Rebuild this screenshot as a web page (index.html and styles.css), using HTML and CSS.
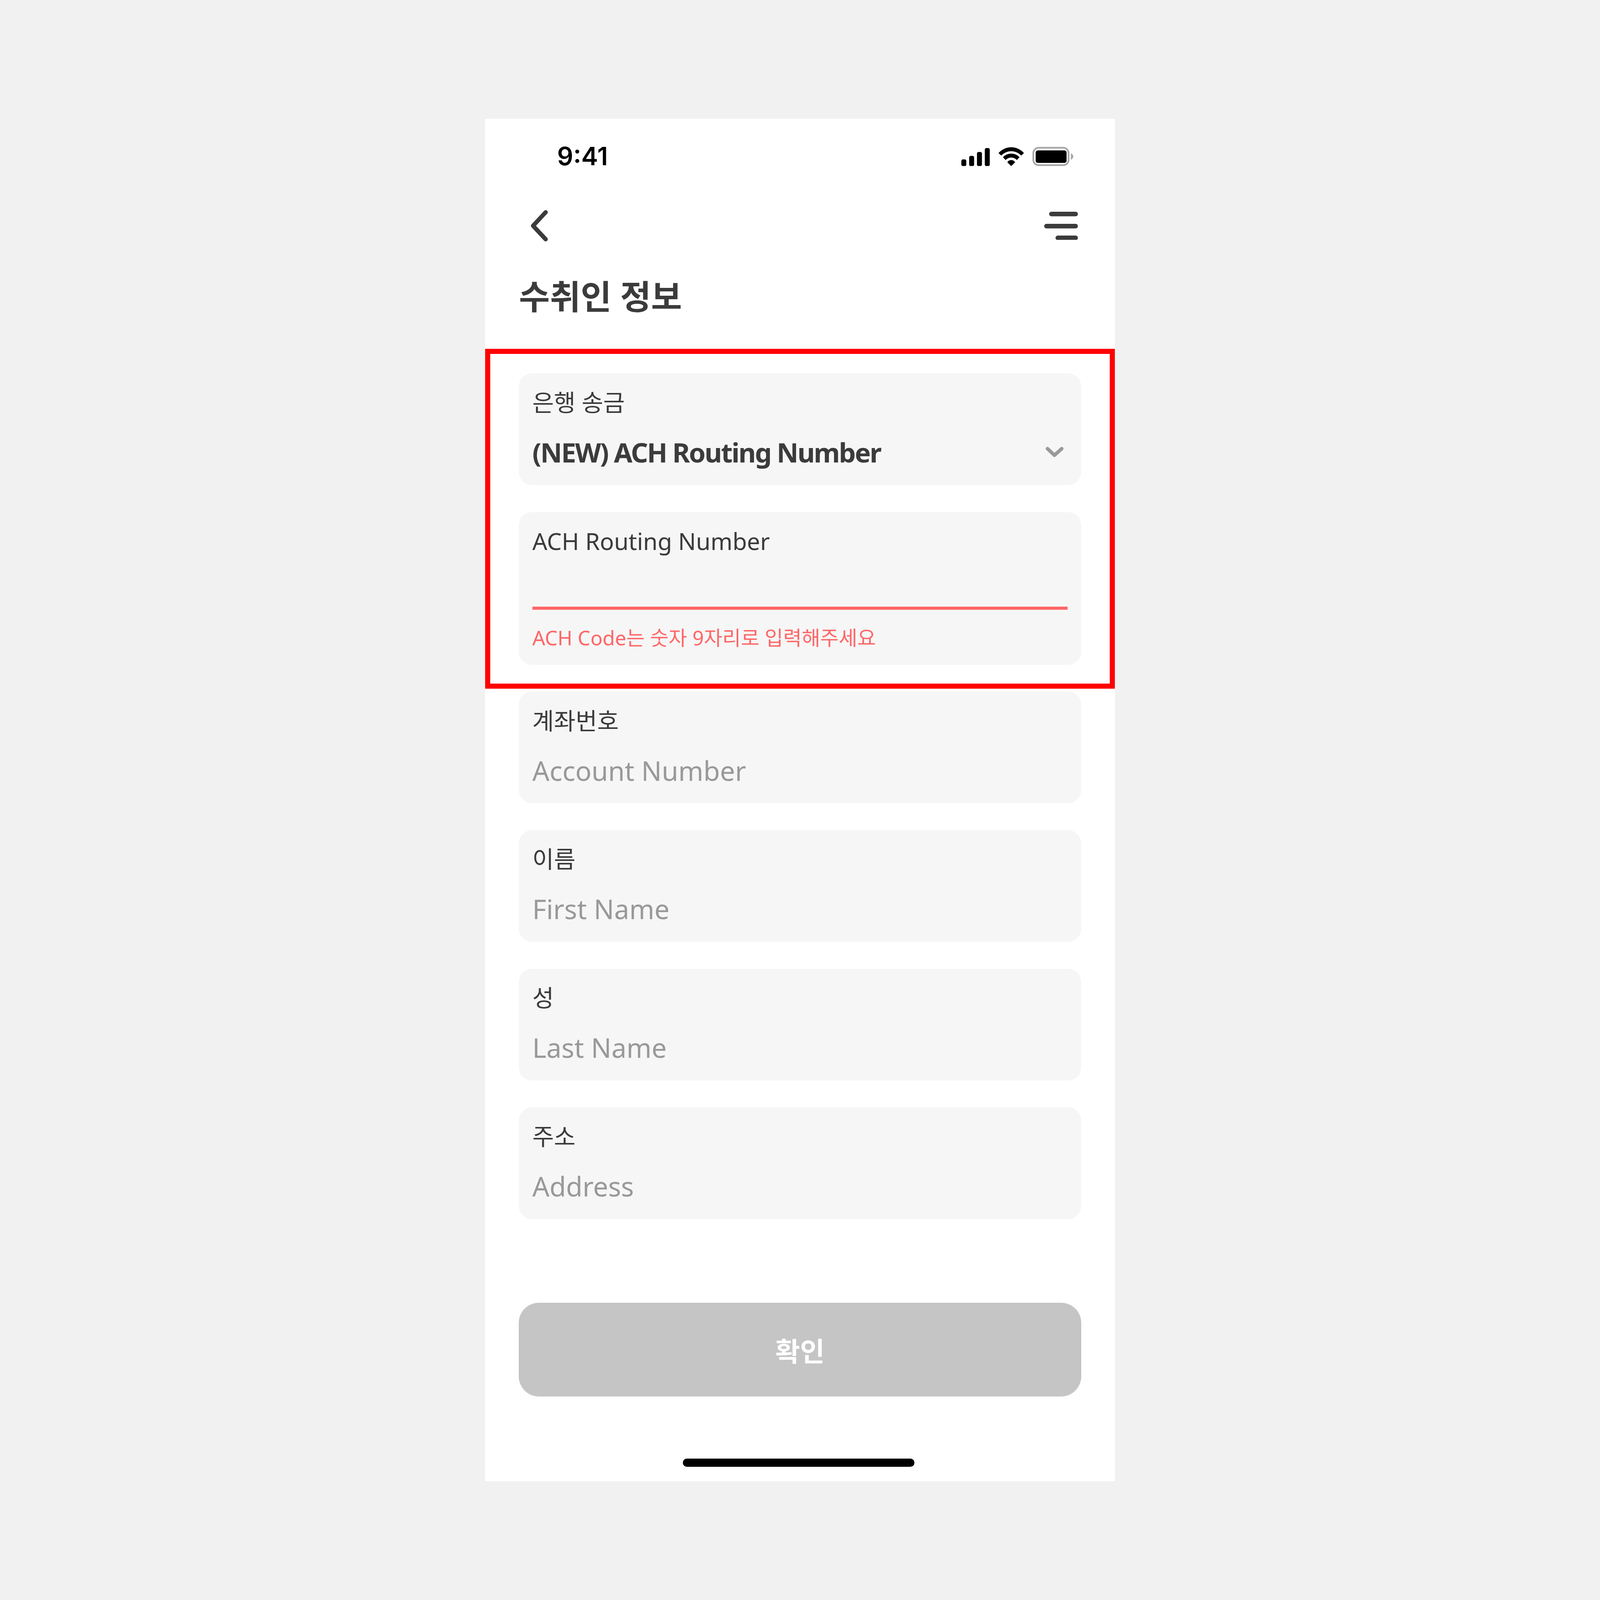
FILE: index.html
```html
<!DOCTYPE html>
<html lang="ko">
<head>
    <meta charset="UTF-8">
    <title>수취인 정보</title>
    <link rel="stylesheet" href="styles.css">
</head>
<body>
    <div class="phone">
        <div class="status-bar">
            <span class="time">9:41</span>
            <div class="status-icons">
                <svg class="signal" viewBox="0 0 80 51">
                    <rect x="0" y="32" width="14" height="19" rx="4.7"/>
                    <rect x="22" y="22" width="14" height="29" rx="4.7"/>
                    <rect x="44" y="11" width="14" height="40" rx="4.7"/>
                    <rect x="66" y="0" width="14" height="51" rx="4.7"/>
                </svg>
                <svg class="wifi" viewBox="0 0 72 53">
                    <path d="M0 16.5A47.5 47.5 0 0 1 72 16.5L64 23.5A37.6 37.6 0 0 0 8 23.5Z"/>
                    <path d="M12.6 27.7A33 33 0 0 1 59.4 27.7L52 36A21.8 21.8 0 0 0 20 36Z"/>
                    <path d="M25 42.4A12.7 12.7 0 0 1 47 42.4L36 53Z"/>
                </svg>
                <svg class="battery" viewBox="0 0 115 54">
                    <rect x="2.5" y="2.5" width="99" height="49" rx="15" fill="none" stroke="#a8a8a8" stroke-width="5"/>
                    <rect x="9" y="10" width="87" height="35" rx="6"/>
                    <path d="M108 18C113 20 115 24 115 27C115 30 113 34 108 36.5Z" fill="#a8a8a8"/>
                </svg>
            </div>
        </div>

        <div class="nav">
            <svg class="back-icon" viewBox="0 0 56 90">
                <path d="M45 7L9.5 45L45 83" fill="none" stroke="#3b3b3b" stroke-width="12" stroke-linecap="round" stroke-linejoin="round"/>
            </svg>
            <svg class="menu-icon" viewBox="0 0 95 80" fill="#3b3b3b">
                <rect x="14" y="0" width="81" height="13" rx="6.5"/>
                <rect x="0" y="34" width="95" height="13" rx="6.5"/>
                <rect x="32" y="67" width="63" height="13" rx="6.5"/>
            </svg>
        </div>

        <h1 class="title">수취인 정보</h1>

        <div class="form">
            <div class="field">
                <div class="label">은행 송금</div>
                <div class="select-row">
                    <span class="value">(NEW) ACH Routing Number</span>
                    <svg class="caret" viewBox="0 0 50 30">
                        <path d="M5 5L24.5 23.5L45 5" fill="none" stroke="#999999" stroke-width="10" stroke-linecap="round" stroke-linejoin="round"/>
                    </svg>
                </div>
            </div>
            <div class="field field-error">
                <div class="label">ACH Routing Number</div>
                <div class="input-line"></div>
                <div class="error-text">ACH Code는 숫자 9자리로 입력해주세요</div>
            </div>
            <div class="field">
                <div class="label">계좌번호</div>
                <div class="placeholder">Account Number</div>
            </div>
            <div class="field">
                <div class="label">이름</div>
                <div class="placeholder">First Name</div>
            </div>
            <div class="field">
                <div class="label">성</div>
                <div class="placeholder">Last Name</div>
            </div>
            <div class="field">
                <div class="label">주소</div>
                <div class="placeholder">Address</div>
            </div>
        </div>

        <button class="confirm-button">확인</button>
        <div class="home-indicator"></div>

        <div class="highlight"></div>
    </div>
</body>
</html>
```

FILE: styles.css
```css
/* 1rem = 1 design pixel of the 375x812 phone */
html {
    font-size: calc(100vw / 953.4);
}

* {
    margin: 0;
    padding: 0;
    box-sizing: border-box;
    font-family: "Noto Sans", "Noto Sans CJK KR", sans-serif;
}

body {
    background-color: #f1f1f1;
    width: 100vw;
    height: 100vh;
    display: flex;
    justify-content: center;
    align-items: center;
    overflow: hidden;
}

.phone {
    position: relative;
    width: 375rem;
    height: 812rem;
    background: white;
    display: flex;
    flex-direction: column;
}

.status-bar {
    height: 45rem;
    padding-left: 42.8rem;
    padding-right: 24.6rem;
    display: flex;
    justify-content: space-between;
    align-items: center;
}

.time {
    font-family: "Inter", sans-serif;
    font-size: 15rem;
    font-weight: 600;
    color: black;
}

.status-icons {
    display: flex;
    align-items: flex-end;
    gap: 5.08rem;
}

.signal { width: 16.95rem; height: 10.8rem; }
.wifi { width: 15.25rem; height: 11.2rem; }
.battery { width: 24.4rem; height: 11.44rem; }

.nav {
    height: 37.7rem;
    padding-left: 26.5rem;
    padding-right: 22rem;
    display: flex;
    justify-content: space-between;
    align-items: center;
}

.back-icon { width: 11.86rem; height: 19.07rem; }
.menu-icon { width: 20.13rem; height: 16.95rem; }

.title {
    margin-top: 6.36rem;
    padding-left: 20rem;
    font-size: 20rem;
    font-weight: 700;
    line-height: 33.9rem;
    color: #3b3b3b;
}

.form {
    margin-top: 28.8rem;
    padding: 0 20rem;
    display: flex;
    flex-direction: column;
    gap: 16rem;
}

.field {
    background: #f6f6f6;
    border-radius: 8rem;
    height: 66.6rem;
    padding: 8rem 8rem 0;
}

.field-error {
    height: 91rem;
}

.label {
    font-size: 14rem;
    line-height: 19rem;
    color: #3b3b3b;
}

.select-row {
    margin-top: 9.5rem;
    padding-right: 2.5rem;
    display: flex;
    justify-content: space-between;
    align-items: center;
}

.value {
    font-size: 16rem;
    font-weight: 700;
    letter-spacing: -0.64rem;
    line-height: 21.2rem;
    color: #3b3b3b;
}

.caret { width: 10.6rem; height: 6.36rem; }

.placeholder {
    margin-top: 9.4rem;
    font-size: 16rem;
    line-height: 21.2rem;
    color: #999999;
}

.input-line {
    margin-top: 29.4rem;
    height: 2rem;
    background: #ff6666;
}

.error-text {
    margin-top: 8rem;
    font-size: 12rem;
    line-height: 17rem;
    color: #ff6666;
}

.confirm-button {
    margin: 49.8rem 20rem 0;
    height: 56rem;
    border: none;
    border-radius: 12rem;
    background: #c5c5c5;
    color: white;
    font-size: 16rem;
    font-weight: 700;
}

.home-indicator {
    margin-top: 36.8rem;
    margin-left: 117.6rem;
    width: 138rem;
    height: 5rem;
    border-radius: 2.5rem;
    background: black;
}

/* red marker over the first two fields */
.highlight {
    position: absolute;
    left: 0;
    top: 137.1rem;
    width: 375rem;
    height: 202.6rem;
    border: 3.2rem solid #ff0000;
}
```
